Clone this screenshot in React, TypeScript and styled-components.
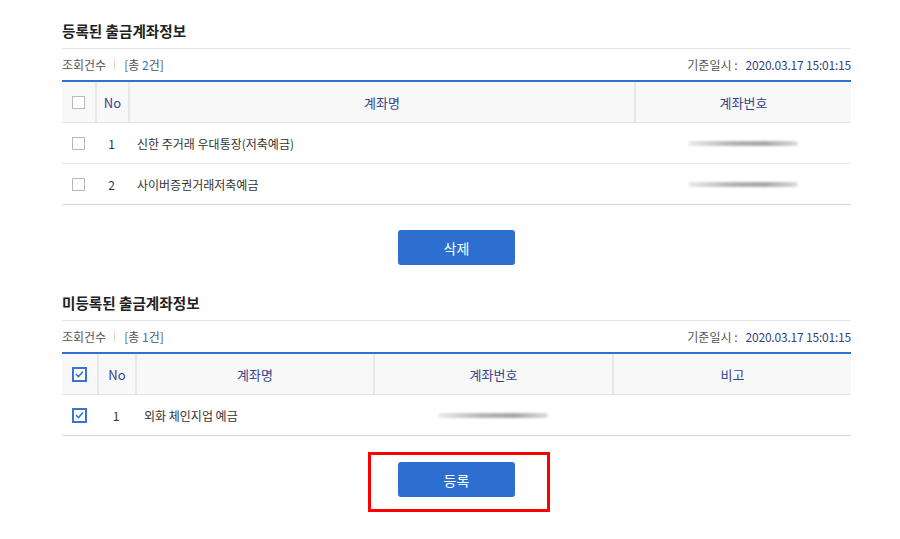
import React from "react";
import styled, { createGlobalStyle } from "styled-components";

const Global = createGlobalStyle`
  body {
    margin: 0;
    background: #fff;
    font-family: "Noto Sans CJK KR", "Noto Sans", sans-serif;
    color: #333;
  }
`

const Page = styled.div`
  width: 789px;
  margin-left: 62px;
  padding-top: 20px;
  padding-bottom: 40px;
`

const Section = styled.section<{ $gap?: number }>`
  display: flex;
  flex-direction: column;
  margin-top: ${p => p.$gap || 0}px;
`

const Title = styled.h2`
  margin: 0;
  font-size: 14.6px;
  font-weight: bold;
  line-height: 22px;
  color: #222;
  padding-bottom: 6px;
  border-bottom: 1px solid #e4e4e4;
`

const InfoRow = styled.div`
  display: flex;
  align-items: center;
  justify-content: space-between;
  height: 31px;
  font-size: 12px;
  color: #555;
  border-bottom: 2px solid #2f6fd1;
`

const Count = styled.div`
  display: flex;
  align-items: center;
  white-space: pre;
`

const Bar = styled.span`
  width: 1px;
  height: 11px;
  background: #d8d8d8;
  margin: 0 9px 0 8px;
`

const Num = styled.b`
  color: #2f6fd1;
  font-weight: normal;
`

const DateLabel = styled.div`
  display: flex;
  align-items: center;
`

const DateValue = styled.span`
  color: #2f3f8c;
  margin-left: 8px;
  letter-spacing: -0.2px;
`

const Grid = styled.div<{ $cols: string; $head?: boolean; $last?: boolean }>`
  display: grid;
  grid-template-columns: ${p => p.$cols};
  height: 40px;
  background: ${p => (p.$head ? "#f8f8f8" : "#fff")};
  border-bottom: 1px solid ${p => (p.$last ? "#d3d6e4" : "#e6e6e6")};
  font-size: ${p => (p.$head ? 13 : 12)}px;
  color: ${p => (p.$head ? "#34448c" : "#333")};
`

const Cell = styled.div<{ $left?: boolean; $line?: boolean }>`
  display: flex;
  align-items: center;
  justify-content: ${p => (p.$left ? "flex-start" : "center")};
  padding-left: ${p => (p.$left ? 9 : 0)}px;
  border-left: ${p => (p.$line ? "2px solid #e8e8e8" : "none")};
`

const Check = styled.span<{ $on?: boolean }>`
  width: 11px;
  height: 11px;
  border: 1px solid ${p => (p.$on ? "#3b72d4" : "#b8b8b8")};
  outline: ${p => (p.$on ? "1px solid #3b72d4" : "none")};
  background: #fff;
  display: flex;
  align-items: center;
  justify-content: center;
`

const Blur = styled.span<{ $w: number }>`
  width: ${p => p.$w}px;
  height: 5px;
  border-radius: 3px;
  background: linear-gradient(90deg, #e8e8e8, #a8a8a8 40%, #999 70%, #d8d8d8);
  filter: blur(1.2px);
  opacity: 0.85;
`

const Actions = styled.div<{ $top: number }>`
  display: flex;
  justify-content: center;
  margin-top: ${p => p.$top}px;
`

const ButtonWrap = styled.div`
  position: relative;
`

const Button = styled.button`
  width: 117px;
  height: 35px;
  border: 0;
  border-radius: 3px;
  background: #2c6fd0;
  color: #fff;
  font-family: inherit;
  font-size: 14px;
  cursor: pointer;
`

const Highlight = styled.span`
  position: absolute;
  left: -30px;
  top: -10px;
  width: 176px;
  height: 54px;
  border: 3px solid #f00;
  pointer-events: none;
`

const Tick = () => (
  <svg width="9" height="8" viewBox="0 0 9 8">
    <path d="M1 4.2 L3.5 6.5 L8 1.5" fill="none" stroke="#3b72d4" strokeWidth="1.6" />
  </svg>
)

const Info = ({ total }: { total: number }) => (
  <InfoRow>
    <Count>
      조회건수<Bar />[총 <Num>{total}</Num>건]
    </Count>
    <DateLabel>
      기준일시 :<DateValue>2020.03.17 15:01:15</DateValue>
    </DateLabel>
  </InfoRow>
)

const cols1 = "33px 33px 506px 1fr"
const cols2 = "35px 38px 238px 239px 1fr"

const registered = [
  { no: 1, name: "신한 주거래 우대통장(저축예금)" },
  { no: 2, name: "사이버증권거래저축예금" },
]

export default function App() {
  return (
    <Page>
      <Global />
      <Section>
        <Title>등록된 출금계좌정보</Title>
        <Info total={2} />
        <Grid $cols={cols1} $head>
          <Cell><Check /></Cell>
          <Cell $line>No</Cell>
          <Cell $line>계좌명</Cell>
          <Cell $line>계좌번호</Cell>
        </Grid>
        {registered.map((r, i) => (
          <Grid key={r.no} $cols={cols1} $last={i === registered.length - 1}>
            <Cell><Check /></Cell>
            <Cell>{r.no}</Cell>
            <Cell $left>{r.name}</Cell>
            <Cell><Blur $w={110} /></Cell>
          </Grid>
        ))}
        <Actions $top={25}>
          <Button>삭제</Button>
        </Actions>
      </Section>

      <Section $gap={27}>
        <Title>미등록된 출금계좌정보</Title>
        <Info total={1} />
        <Grid $cols={cols2} $head>
          <Cell><Check $on><Tick /></Check></Cell>
          <Cell $line>No</Cell>
          <Cell $line>계좌명</Cell>
          <Cell $line>계좌번호</Cell>
          <Cell $line>비고</Cell>
        </Grid>
        <Grid $cols={cols2} $last>
          <Cell><Check $on><Tick /></Check></Cell>
          <Cell>1</Cell>
          <Cell $left>외화 체인지업 예금</Cell>
          <Cell><Blur $w={110} /></Cell>
          <Cell />
        </Grid>
        <Actions $top={26}>
          <ButtonWrap>
            <Button>등록</Button>
            <Highlight />
          </ButtonWrap>
        </Actions>
      </Section>
    </Page>
  )
}
